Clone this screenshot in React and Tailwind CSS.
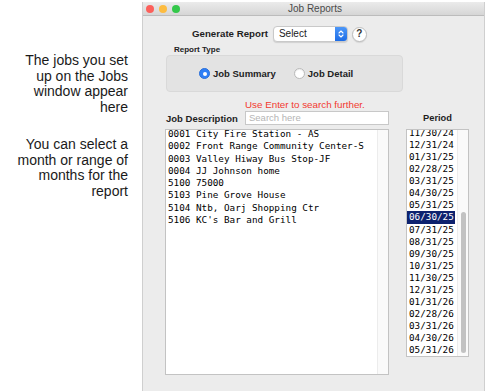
// Job Reports window with side notes
const jobs = [
  "0001 City Fire Station - AS",
  "0002 Front Range Community Center-S",
  "0003 Valley Hiway Bus Stop-JF",
  "0004 JJ Johnson home",
  "5100 75000",
  "5103 Pine Grove House",
  "5104 Ntb, Oarj Shopping Ctr",
  "5106 KC's Bar and Grill",
];

const periods = [
  "11/30/24", "12/31/24", "01/31/25", "02/28/25", "03/31/25", "04/30/25", "05/31/25",
  "06/30/25", "07/31/25", "08/31/25", "09/30/25", "10/31/25", "11/30/25", "12/31/25",
  "01/31/26", "02/28/26", "03/31/26", "04/30/26", "05/31/26",
];

const sans = "font-['Liberation_Sans',Arial,sans-serif]";
const mono = "font-['DejaVu_Sans_Mono',monospace]";

const Radio = ({ checked, label }) => (
  <div className="flex items-center gap-[3px]">
    {checked ? (
      <span className="w-[11px] h-[11px] rounded-full bg-[#2f7ff6] border border-[#2a6fd9] flex items-center justify-center">
        <span className="w-[4px] h-[4px] rounded-full bg-white" />
      </span>
    ) : (
      <span className="w-[11px] h-[11px] rounded-full bg-white border border-[#b9b9b9] shadow-[inset_0_1px_1px_rgba(0,0,0,0.08)]" />
    )}
    <span className="text-[9.5px] font-bold text-[#222] leading-[12px]">{label}</span>
  </div>
);

export default function App() {
  return (
    <div className={`w-[486px] h-[391px] bg-white flex overflow-hidden ${sans}`}>
      {/* Notes */}
      <div className="w-[142px] shrink-0 pr-[14px] pt-[53px] text-right text-[14px] leading-[15.5px] text-[#1a1a1a]">
        <p>The jobs you set<br />up on the Jobs<br />window appear<br />here</p>
        <p className="mt-[22px]">You can select a<br />month or range of<br />months for the<br />report</p>
      </div>

      {/* Window */}
      <div className="w-[343px] mt-[2px] bg-[#ececec] border-l border-r border-[#cfcfcf] flex flex-col">
        <div className="h-[14px] bg-gradient-to-b from-[#ebebeb] to-[#d6d6d6] border-b border-[#bcbcbc] flex items-center relative">
          <div className="flex gap-[5px] pl-[3px]">
            <span className="w-[8px] h-[8px] rounded-full bg-[#fc605b]" />
            <span className="w-[8px] h-[8px] rounded-full bg-[#fdbc40]" />
            <span className="w-[8px] h-[8px] rounded-full bg-[#34c84a]" />
          </div>
          <span className="absolute left-[145px] top-[0px] text-[10px] leading-[13px] text-[#4a4a4a]">Job Reports</span>
        </div>

        <div className="mt-[10px] pl-[49px] flex items-center h-[16px]">
          <span className="text-[9.7px] font-bold text-[#1e1e1e]">Generate Report</span>
          <div className="ml-[5px] w-[75px] h-[16px] bg-white rounded-[4px] border border-[#c9c9c9] shadow-[0_1px_1px_rgba(0,0,0,0.12)] flex items-center overflow-hidden">
            <span className="flex-1 pl-[5px] text-[10px] text-[#222] leading-[14px]">Select</span>
            <span className="w-[12px] h-full bg-gradient-to-b from-[#4c97f8] to-[#1c6ce6] flex items-center justify-center">
              <svg width="6" height="10" viewBox="0 0 6 10" fill="none" stroke="white" strokeWidth="1.1" strokeLinecap="round" strokeLinejoin="round">
                <polyline points="1,4 3,2 5,4" />
                <polyline points="1,6 3,8 5,6" />
              </svg>
            </span>
          </div>
          <span className="ml-[4px] w-[15px] h-[15px] rounded-full bg-white border border-[#bdbdbd] shadow-[0_1px_1px_rgba(0,0,0,0.1)] flex items-center justify-center text-[10px] font-bold text-[#333] leading-none">?</span>
        </div>

        <div className="mt-[3px] pl-[31px] h-[10px] text-[8px] font-bold text-[#222] leading-[10px]">Report Type</div>
        <div className="ml-[23px] w-[237px] h-[37px] bg-[#e3e3e3] border border-[#d9d9d9] rounded-[4px] flex items-center pl-[32px] gap-[18px]">
          <Radio checked label="Job Summary" />
          <Radio label="Job Detail" />
        </div>

        <div className="mt-[6px] ml-[22px] flex gap-[17px]">
          <div className="w-[224px] flex flex-col">
            <div className="h-[13px] pl-[80px] text-[9.8px] text-[#f23a30] leading-[13px]">Use Enter to search further.</div>
            <div className="flex h-[14px]">
              <span className="w-[80px] pl-[1px] text-[9.5px] font-bold text-[#1e1e1e] leading-[15px]">Job Description</span>
              <div className="flex-1 bg-white border border-[#c8c8c8] pl-[3px] text-[9.5px] text-[#b5b5b5] leading-[12px]">Search here</div>
            </div>
            <div className="mt-[4px] h-[246px] bg-white border border-[#c3c3c3] flex overflow-hidden">
              <div className={`flex-1 pl-[2px] -mt-[2px] ${mono} text-[9.3px] leading-[12.3px] text-black whitespace-pre`}>
                {jobs.map((j) => (
                  <div key={j}>{j}</div>
                ))}
              </div>
              <div className="w-[11px] bg-[#fafafa] border-l border-[#ececec]" />
            </div>
          </div>

          <div className="w-[63px] flex flex-col">
            <div className="h-[13px]" />
            <div className="h-[14px] text-center text-[9.3px] font-bold text-[#1e1e1e] leading-[15px]">Period</div>
            <div className="mt-[4px] h-[228px] bg-white border border-[#c3c3c3] flex overflow-hidden">
              <div className={`flex-1 -mt-[3px] ${mono} text-[9.3px] leading-[12.06px] text-black`}>
                {periods.map((p) => (
                  <div key={p} className={p === "06/30/25" ? "bg-[#0d226f] text-white pl-[2px] mr-[2px]" : "pl-[2px]"}>{p}</div>
                ))}
              </div>
              <div className="w-[11px] bg-[#fafafa] border-l border-[#ececec] relative">
                <span className="absolute left-[3px] top-[82px] w-[5px] h-[141px] rounded-full bg-[#c2c2c2]" />
              </div>
            </div>
          </div>
        </div>
      </div>
    </div>
  );
}
